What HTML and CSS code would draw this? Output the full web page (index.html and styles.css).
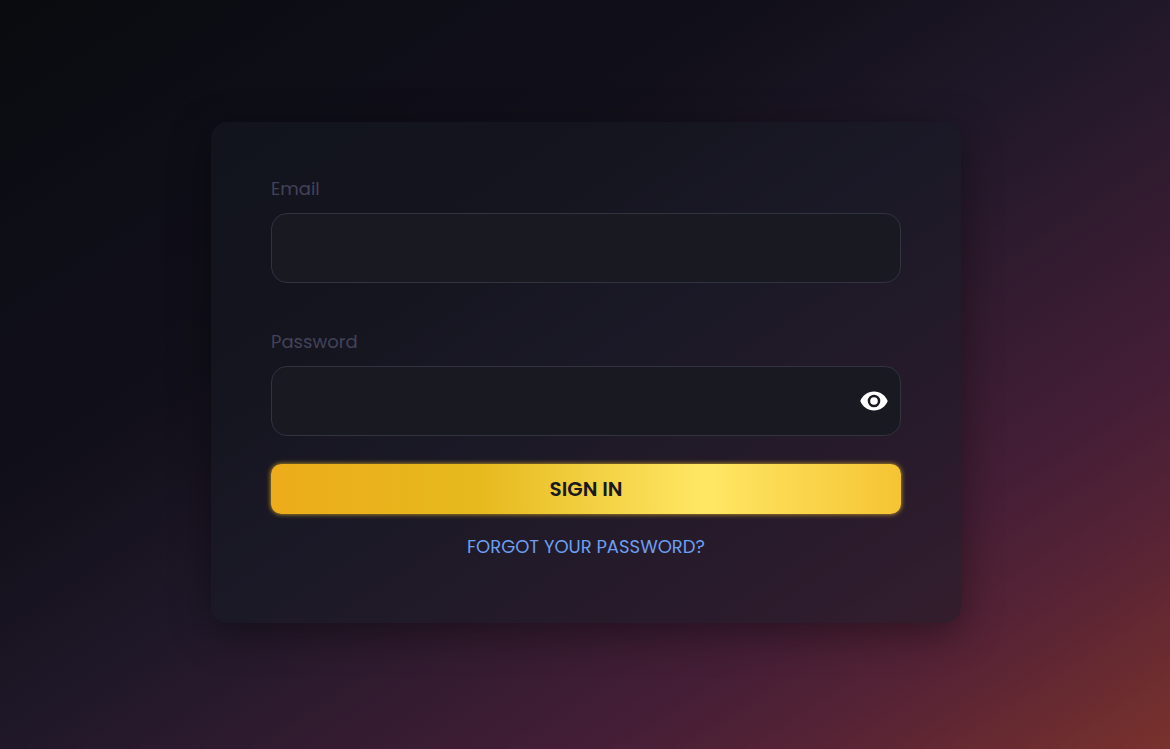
FILE: index.html
```
<!DOCTYPE html>
<html lang="en">
<head>
    <meta charset="UTF-8">
    <meta name="viewport" content="width=device-width, initial-scale=1.0">
    <title>Sign in</title>
    <link rel="stylesheet" href="styles.css">
</head>
<body>
<form class="login-card" id="login-form">
    <div class="form-group">
        <label for="email">Email</label>
        <input type="email" id="email" name="email" required>
    </div>
    <div class="form-group">
        <label for="password">Password</label>
        <div class="password-field">
            <input type="password" id="password" name="password" required>
            <button type="button" class="toggle-btn" aria-label="Show password" onclick="togglePassword()">
                <svg viewBox="0 0 28 20" width="28" height="20" aria-hidden="true">
                    <path fill="#fff" fill-rule="evenodd" d="M14 0.5C7.7 0.5 2.4 4.4 0.3 10c2.1 5.6 7.4 9.5 13.7 9.5s11.6-3.9 13.7-9.5C25.6 4.4 20.3 0.5 14 0.5zM14 16.3a6.3 6.3 0 1 1 0-12.6 6.3 6.3 0 0 1 0 12.6zM14 6.2a3.8 3.8 0 1 0 0 7.6 3.8 3.8 0 0 0 0-7.6z"/>
                </svg>
            </button>
        </div>
    </div>
    <button type="submit" class="btn">SIGN IN</button>
    <a class="forgot-link" href="#">FORGOT YOUR PASSWORD?</a>
</form>

<script>
    function togglePassword() {
        const input = document.getElementById('password');
        input.type = input.type === 'password' ? 'text' : 'password';
    }
</script>
</body>
</html>
```
FILE: styles.css
```
* {
    box-sizing: border-box;
}

body {
    font-family: Poppins, Inter, sans-serif;
    display: flex;
    justify-content: center;
    align-items: center;
    min-height: 100vh;
    margin: 0;
    padding: 20px 20px 24px 22px;
    background: linear-gradient(147deg, #090b0e 0%, #0e0e17 18%, #110f19 33%, #201829 50%, #441e36 75%, #572335 85%, #79322c 100%);
}

.login-card {
    display: flex;
    flex-direction: column;
    width: 100%;
    max-width: 750px;
    padding: 53px 60px 62px;
    background: rgba(22, 26, 36, 0.5);
    box-shadow: 0 10px 40px rgba(0, 0, 0, 0.4);
    border-radius: 16px;
}

.form-group {
    margin-bottom: 45px;
}

.form-group + .form-group {
    margin-bottom: 28px;
}

.form-group label {
    display: block;
    margin-bottom: 10px;
    font-size: 18px;
    line-height: 28px;
    color: #444259;
}

.form-group input {
    display: block;
    width: 100%;
    height: 70px;
    padding: 0 20px;
    font-family: inherit;
    font-size: 18px;
    color: #fff;
    background: #191921;
    border: 1px solid #323240;
    border-radius: 16px;
    outline: none;
}

.password-field {
    position: relative;
}

.form-group .password-field input {
    padding-right: 56px;
}

.toggle-btn {
    position: absolute;
    top: 0;
    right: 13px;
    display: flex;
    align-items: center;
    height: 100%;
    padding: 0;
    background: none;
    border: none;
    cursor: pointer;
}

.btn {
    height: 50px;
    font-family: inherit;
    font-size: 20px;
    font-weight: 600;
    color: #191921;
    background: linear-gradient(90deg, #edac1b 0%, #e6b91e 33%, #ffe765 69%, #f5c433 100%);
    border: none;
    border-radius: 10px;
    box-shadow: 0 0 5px rgba(255, 200, 40, 0.8);
    cursor: pointer;
}

.forgot-link {
    align-self: center;
    margin-top: 19px;
    font-size: 18px;
    line-height: 28px;
    color: #6c9ff2;
    text-decoration: none;
}
```
